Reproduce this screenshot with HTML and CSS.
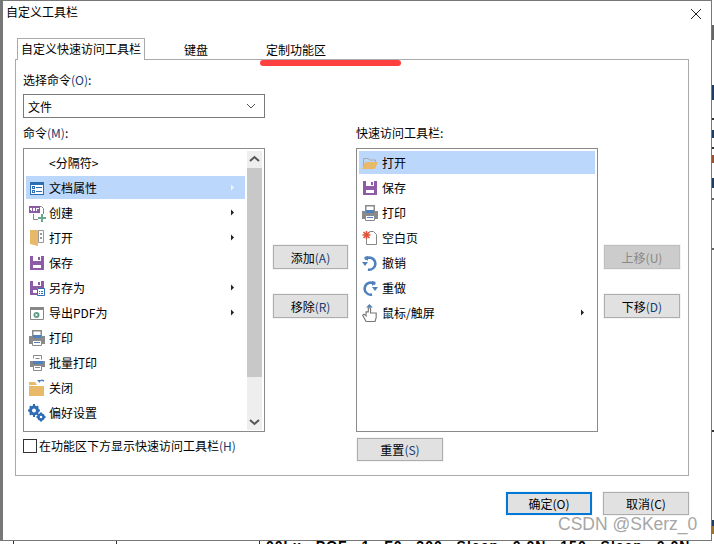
FILE: index.html
```html
<!DOCTYPE html>
<html lang="zh">
<head>
<meta charset="utf-8">
<title>自定义工具栏</title>
<link rel="stylesheet" href="styles.css">
</head>
<body>
<svg class="defs" width="0" height="0" aria-hidden="true">
  <symbol id="i-save" viewBox="0 0 16 16">
    <path fill="#8e5ba6" d="M1 1h14v14H1z"/>
    <path fill="#fff" d="M4 1h8v5H4zM4 10h8v3H4z"/>
    <path fill="#8e5ba6" d="M9 2h2v3H9z"/>
  </symbol>
  <symbol id="i-print" viewBox="0 0 18 18">
    <path fill="#fff" stroke="#8a8a8a" stroke-width="1.500" d="M4.750 1.750h8.500v6h-8.500z"/>
    <path fill="#8a8a8a" d="M1 7h16v8H1z"/>
    <path fill="#4f81bd" d="M5 6h8v3H5z"/>
    <path fill="#fff" stroke="#8a8a8a" d="M4.500 11.500h9v5h-9z"/>
    <path fill="#4f81bd" d="M6 13h6v1H6z"/>
  </symbol>
  <symbol id="i-arrow" viewBox="0 0 5 7">
    <path fill="currentColor" d="M1 0.500l3 3-3 3z"/>
  </symbol>
</svg>

<div class="stage">
<div class="dialog">
  <header class="titlebar">
    <span class="title">自定义工具栏</span>
    <svg class="close" width="12" height="12" viewBox="0 0 12 12"><path d="M1 1l10 10M11 1L1 11" stroke="#222" stroke-width="1" fill="none"/></svg>
  </header>

  <nav class="tabs">
    <span class="tab active">自定义快速访问工具栏</span>
    <span class="tab tab-key">键盘</span>
    <span class="tab tab-ribbon">定制功能区</span>
  </nav>
  <div class="redline"></div>

  <main class="panel">
    <section class="col-left">
      <label class="lbl">选择命令<span class="k">(O)</span>:</label>
      <div class="combo">
        <span>文件</span>
        <svg width="10" height="6" viewBox="0 0 10 6"><path d="M1 1l4 4 4-4" fill="none" stroke="#555"/></svg>
      </div>
      <label class="lbl lbl-cmd">命令<span class="k">(M)</span>:</label>
      <div class="listbox has-scroll">
        <ul class="rows">
          <li class="row"><span class="ico"></span><span>&lt;分隔符&gt;</span></li>
          <li class="row sel">
            <svg class="ico" viewBox="0 0 16 16"><path fill="#2e6db4" d="M1 2h14v13H1z"/><path fill="#fff" d="M2 5h12v9H2z"/><path fill="#2e6db4" d="M3 6h3v3H3zM3 10h3v3H3zM7 7h6v1H7zM7 11h6v1H7z"/><path fill="#fff" d="M4 7h1v1H4zM4 11h1v1H4z"/></svg>
            <span>文档属性</span>
            <svg class="arr" width="5" height="7"><use href="#i-arrow"/></svg>
          </li>
          <li class="row">
            <svg class="ico" viewBox="0 0 16 16"><path fill="none" stroke="#888" d="M9 1.500h3.500l2 2V9M4.500 9v5.500H9"/><path fill="#8e5ba6" d="M0 1h11v7H0z"/><path fill="#6aa78f" d="M12 9h2v3h3v2h-3v3h-2v-3H9v-2h3z"/><path fill="#fff" d="M1 3h2v3H2v-1H1zM4 3h2v3H4zM7 3h3v1H8v2H7z"/></svg>
            <span>创建</span>
            <svg class="arr" width="5" height="7"><use href="#i-arrow"/></svg>
          </li>
          <li class="row">
            <svg class="ico ico-tall" viewBox="0 0 16 18"><path fill="#e8b968" d="M1 1h8v16l-4-1-4-1z"/><path fill="#fff" stroke="#999" d="M9.500 1.500h5v12h-5z"/><path fill="#999" d="M11 4h2v2h-2zM11 8h2v2h-2z"/></svg>
            <span>打开</span>
            <svg class="arr" width="5" height="7"><use href="#i-arrow"/></svg>
          </li>
          <li class="row"><svg class="ico"><use href="#i-save"/></svg><span>保存</span></li>
          <li class="row">
            <svg class="ico" viewBox="0 0 16 16"><use href="#i-save" width="16" height="16"/><path fill="#fff" d="M8 8h8v8H8z"/><path fill="#fff" stroke="#2e6db4" d="M8.500 8.500h7v7h-7z"/><path fill="#2e6db4" d="M10 11h1v1h-1zM12 11h2v1h-2zM10 13h1v1h-1zM12 13h2v1h-2z"/></svg>
            <span>另存为</span>
            <svg class="arr" width="5" height="7"><use href="#i-arrow"/></svg>
          </li>
          <li class="row">
            <svg class="ico" viewBox="0 0 16 16"><path fill="#fff" stroke="#888" d="M1.500 2.500h13v12h-13z"/><path fill="#888" d="M1 2h14v3H1z"/><circle cx="7.500" cy="10" r="3" fill="#5f9c88"/><path fill="#fff" d="M6.500 8.500l2.500 1.500-2.500 1.500z"/></svg>
            <span>导出PDF为</span>
            <svg class="arr" width="5" height="7"><use href="#i-arrow"/></svg>
          </li>
          <li class="row"><svg class="ico ico-lg"><use href="#i-print"/></svg><span>打印</span></li>
          <li class="row">
            <svg class="ico ico-lg" viewBox="0 0 18 18"><path fill="none" stroke="#888" d="M5.500 4.500v-3h8v4"/><path fill="none" stroke="#888" d="M7.500 4.500h4"/><path fill="#888" d="M2 7h15v6H2z"/><path fill="#4f81bd" d="M5 7h10v3H5z"/><path fill="#fff" stroke="#888" d="M5.500 11.500h8v5h-8z"/><path fill="#888" d="M7 13h5v1H7z"/></svg>
            <span>批量打印</span>
          </li>
          <li class="row">
            <svg class="ico ico-lg" viewBox="0 0 18 18"><path fill="#e8b968" d="M1 3h6l2 3h7v11H1z"/><path fill="#fff" d="M1 6h15v1H1z"/><path fill="none" stroke="#4f81bd" stroke-width="1.500" d="M11 3c1-2 3-2 5-1"/><path fill="#4f81bd" d="M9 1h3v3z"/></svg>
            <span>关闭</span>
          </li>
          <li class="row">
            <svg class="ico ico-lg" viewBox="0 0 18 18"><circle cx="6" cy="6.500" r="3.500" fill="none" stroke="#2e6db4" stroke-width="3"/><circle cx="13" cy="13" r="2.500" fill="none" stroke="#2e6db4" stroke-width="2.500"/><path stroke="#2e6db4" stroke-width="2" d="M6 0v2M6 11v2M0 6.500h2M10 6.500h2M1.800 2.300l1.500 1.500M8.700 9.200l1.500 1.500M10.200 2.300L8.700 3.800M3.300 9.200l-1.500 1.500M13 8.500v2M13 15.500v2M8.500 13h2M15.500 13h2"/></svg>
            <span>偏好设置</span>
          </li>
        </ul>
        <div class="scrollbar">
          <svg class="sb-btn" width="15" height="17" viewBox="0 0 15 17"><path d="M3 10l4.500-4 4.500 4" fill="none" stroke="#555" stroke-width="2"/></svg>
          <div class="sb-thumb"></div>
          <div class="sb-track"></div>
          <svg class="sb-btn" width="15" height="17" viewBox="0 0 15 17"><path d="M3 7l4.500 4 4.500-4" fill="none" stroke="#555" stroke-width="2"/></svg>
        </div>
      </div>
      <div class="check"><span class="box"></span><span>在功能区下方显示快速访问工具栏<span class="k">(H)</span></span></div>
    </section>

    <section class="col-btn col-mid">
      <button class="btn">添加<span class="k">(A)</span></button>
      <button class="btn">移除<span class="k">(R)</span></button>
    </section>

    <section class="col-right">
      <label class="lbl">快速访问工具栏:</label>
      <div class="listbox">
        <ul class="rows">
          <li class="row sel">
            <svg class="ico" viewBox="0 0 16 16"><path fill="none" stroke="#aaa" d="M1.500 13V3.500h5l1 1.500h6v2"/><path fill="#e8b968" d="M3 7h13l-3 7H0z"/></svg>
            <span>打开</span>
          </li>
          <li class="row"><svg class="ico"><use href="#i-save"/></svg><span>保存</span></li>
          <li class="row"><svg class="ico ico-lg"><use href="#i-print"/></svg><span>打印</span></li>
          <li class="row">
            <svg class="ico" viewBox="0 0 16 16"><path fill="#fff" stroke="#888" d="M7.500 1.500h4l3 3v10h-10V8"/><path stroke="#e0523a" stroke-width="1.500" d="M4.500 1v8M.5 5h8M1.500 2l6 6M7.500 2l-6 6"/></svg>
            <span>空白页</span>
          </li>
          <li class="row">
            <svg class="ico" viewBox="0 0 16 16"><path fill="none" stroke="#4f81bd" stroke-width="2.500" d="M3 4.500a6 6 0 1 1 3 10"/><path fill="#4f81bd" d="M0 7l6 0-3 4zM2 2l4-1v5z"/></svg>
            <span>撤销</span>
          </li>
          <li class="row">
            <svg class="ico" viewBox="0 0 16 16"><path fill="none" stroke="#4f81bd" stroke-width="2.500" d="M13 4.500a6 6 0 1 0-3 10"/><path fill="#4f81bd" d="M16 7l-6 0 3 4zM14 2l-4-1v5z"/></svg>
            <span>重做</span>
          </li>
          <li class="row">
            <svg class="ico ico-lg" viewBox="0 0 16 16"><path fill="#fff" stroke="#777" d="M6.500 7V3.500h2V8h5v4l-1 3.500h-8L1.500 10l1-1 2 1.500V7z"/><path fill="#4f81bd" d="M4.500 3L7.500 0l3 3z"/></svg>
            <span>鼠标/触屏</span>
            <svg class="arr" width="5" height="7"><use href="#i-arrow"/></svg>
          </li>
        </ul>
      </div>
      <button class="btn btn-reset">重置<span class="k">(S)</span></button>
    </section>

    <section class="col-btn col-far">
      <button class="btn off" disabled>上移(U)</button>
      <button class="btn">下移<span class="k">(D)</span></button>
    </section>
  </main>

  <footer class="actions">
    <button class="btn wide default">确定(O)</button>
    <button class="btn wide">取消(C)</button>
  </footer>
  <span class="mark">CSDN @SKerz_0</span>
</div>
<div class="edge"></div>
</div>

<div class="under">
  <span class="u-cell u-a"></span>
  <span class="u-cell u-b"></span>
  <span class="u-cell u-c"></span>
  <span class="u-text">00Lx POF 1 F0 300 Sleep 0.0N 150 Sleep 0.0N</span>
</div>
</body>
</html>
```
FILE: styles.css
```css
* { box-sizing: border-box; }
html, body { margin: 0; padding: 0; }
body {
  width: 714px;
  height: 544px;
  overflow: hidden;
  background: #fff;
  font-family: "Noto Sans CJK SC", "Liberation Sans", sans-serif;
  font-size: 12px;
  color: #000;
}
.defs { position: absolute; }
.stage { display: flex; height: 541px; }
.dialog {
  width: 712px;
  height: 541px;
  flex: none;
  border: 1px solid #777;
  border-width: 1px 1px 1px 3px;
  background: #fff;
  display: flex;
  flex-direction: column;
  position: relative;
}
.edge {
  width: 2px;
  flex: none;
  background: linear-gradient(#fff 0 25px, #666 25px 40px, #fff 40px 85px, #1d3f66 85px 100px,
    #fff 100px 118px, #333 118px 120px, #fff 120px 130px, #1d3f66 130px 138px, #fff 138px 147px,
    #333 147px 149px, #fff 149px 155px, #a0522d 155px 163px, #fff 163px 178px, #1d3f66 178px 188px,
    #fff 188px 198px, #666 198px 200px, #fff 200px 248px, #666 248px 250px, #fff 250px 430px,
    #333 430px 432px, #fff 432px 520px, #1d3f66 520px 526px, #a0722d 526px 534px, #fff 534px);
}
.under {
  height: 3px;
  overflow: hidden;
  display: flex;
  align-items: flex-start;
}
.u-cell { height: 3px; flex: none; border-left: 1px solid #333; }
.u-a { width: 13px; border-left: 0; }
.u-b { width: 103px; }
.u-c { width: 143px; }
.u-text {
  border-left: 1px solid #333;
  padding-left: 6px;
  font-family: "Liberation Sans", sans-serif;
  font-weight: 700;
  font-size: 14px;
  line-height: 11px;
  word-spacing: 9px;
  letter-spacing: 1px;
  white-space: nowrap;
  height: 3px;
}
.titlebar {
  height: 37px;
  padding: 3px 9px 0 3px;
  display: flex;
  justify-content: space-between;
  align-items: flex-start;
  flex: none;
}
.title { line-height: 16px; }
.close { margin-top: 4px; }
.tabs {
  height: 22px;
  padding-left: 14px;
  display: flex;
  flex: none;
  margin-bottom: -1px;
  position: relative;
  z-index: 1;
}
.tab { line-height: 20px; }
.tab.active {
  width: 128px;
  border: 1px solid #aaa;
  border-bottom: 0;
  background: #fff;
  text-align: center;
  height: 22px;
}
.tab-key { margin-left: 39px; padding-top: 2px; }
.tab-ribbon { margin-left: 58px; padding-top: 2px; }
.redline {
  position: absolute;
  left: 257px;
  top: 59px;
  width: 141px;
  height: 6px;
  border-radius: 3px;
  background: #ff4040;
  z-index: 2;
}
.panel {
  width: 674px;
  height: 417px;
  margin-left: 12px;
  flex: none;
  border: 1px solid #aaa;
  padding: 0 0 0 7px;
  display: flex;
}
.lbl { display: block; line-height: 16px; }
.k { color: #163d70; }
.col-left { width: 242px; padding-top: 12px; flex: none; }
.combo {
  height: 24px;
  margin-top: 6px;
  border: 1px solid #7a7a7a;
  padding: 0 8px 0 4px;
  display: flex;
  align-items: center;
  justify-content: space-between;
}
.lbl-cmd { margin-top: 7px; }
.listbox {
  width: 242px;
  height: 284px;
  margin-top: 7px;
  border: 1px solid #8a8a8a;
  padding: 2px 2px 0;
  display: flex;
  justify-content: space-between;
}
.has-scroll { padding-right: 2px; }
.rows { list-style: none; margin: 0; padding: 0; flex: 1; min-width: 0; }
.has-scroll .rows { margin-right: 2px; }
.row {
  height: 23px;
  margin-bottom: 2px;
  display: flex;
  align-items: center;
  padding-left: 3px;
  padding-right: 10px;
  gap: 4px;
  white-space: nowrap;
}
.row .arr { margin-left: auto; flex: none; color: #222; }
.row.sel { background: #bbd7fc; }
.row.sel .arr { color: #f4f4f4; }
.ico { width: 16px; height: 16px; flex: none; display: block; overflow: visible; }
.ico-tall { height: 18px; }
.ico-lg { width: 18px; height: 18px; margin: 0 -1px; }
.scrollbar {
  width: 15px;
  flex: none;
  background: #eee;
  display: flex;
  flex-direction: column;
  height: 279px;
}
.sb-btn { flex: none; display: block; }
.sb-thumb { height: 209px; background: #c8c8c8; flex: none; }
.sb-track { flex: 1; }
.check {
  margin-top: 6px;
  display: flex;
  align-items: center;
  gap: 2px;
  line-height: 16px;
}
.box { width: 14px; height: 14px; border: 1px solid #333; background: #fff; flex: none; }
.col-btn { display: flex; flex-direction: column; gap: 25px; padding-top: 185px; flex: none; }
.col-mid { width: 91px; padding-left: 8px; }
.col-right { width: 242px; flex: none; padding-top: 65px; }
.col-far { padding-left: 6px; }
.btn {
  width: 75px;
  height: 24px;
  padding: 0;
  border: 1px solid #adadad;
  outline: 1px solid #f4f4f4;
  outline-offset: 0;
  background: #e1e1e1;
  font: inherit;
  color: #000;
  display: block;
}
.col-far .btn { width: 76px; }
.btn.off { background: #ccc; color: #888; border-color: #bfbfbf; }
.btn-reset { width: 86px; height: 23px; margin: 6px 0 0 1px; }
.actions {
  display: flex;
  justify-content: flex-end;
  gap: 11px;
  padding: 16px 22px 0 0;
}
.btn.wide { width: 86px; height: 23px; }
.btn.default { border: 2px solid #0078d7; }
.mark {
  position: absolute;
  left: 555px;
  top: 511px;
  font-family: "Liberation Sans", sans-serif;
  font-size: 17.500px;
  line-height: 24px;
  color: #a6a6a6;
  white-space: nowrap;
}
```
